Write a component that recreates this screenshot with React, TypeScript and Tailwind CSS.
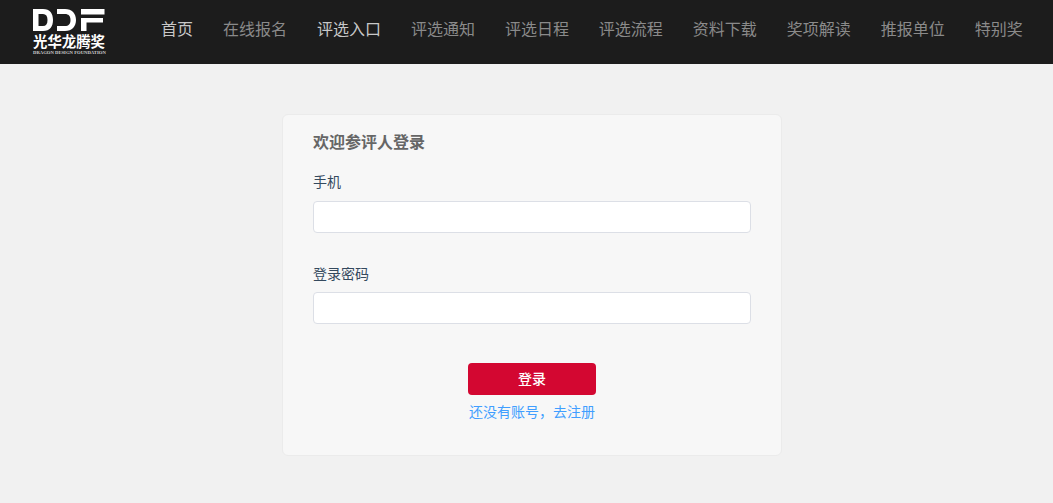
const cjk = "font-['Liberation_Sans','Noto_Sans_CJK_SC',sans-serif]";

const navItems = [
  { label: "首页", active: true },
  { label: "在线报名" },
  { label: "评选入口", active: true },
  { label: "评选通知" },
  { label: "评选日程" },
  { label: "评选流程" },
  { label: "资料下载" },
  { label: "奖项解读" },
  { label: "推报单位" },
  { label: "特别奖" },
];

function Logo() {
  return (
    <div className="flex w-[74px] flex-col items-start pt-[1px]">
      <svg width="73" height="22" viewBox="0 0 73 22" className="block" fill="#ffffff">
        <path fillRule="evenodd" d="M1 0H11C18 0 21 4.5 21 11C21 17.5 18 22 11 22H1ZM6.5 5V17H11C14 17 15.5 15 15.5 11C15.5 7 14 5 11 5Z" />
        <path d="M25 0H33C40 0 44 4.5 44 11C44 17.5 40 22 33 22H25V17H33C36.5 17 38.5 15 38.5 11C38.5 7 36.5 5 33 5H25Z" />
        <path d="M49 0H72.5V5.5H49ZM49 9H71V13.5H54.5V22H49Z" />
      </svg>
      <div className="mt-[3px] ml-[1px] whitespace-nowrap text-[14.4px] leading-[16px] font-bold text-white">光华龙腾奖</div>
      <div className="ml-[1px] whitespace-nowrap font-['Liberation_Serif',serif] text-[4.7px] leading-[6px] font-bold text-[#cfcfcf]">
        DRAGON DESIGN FOUNDATION
      </div>
    </div>
  );
}

function Field({ label, className, gap }: { label: string; className?: string; gap: string }) {
  return (
    <div className={className}>
      <label className="block text-sm leading-5 text-[#34495e]">{label}</label>
      <input
        type="text"
        className={`${gap} block h-8 w-full rounded-[4px] border border-[#dcdfe6] bg-white outline-none`}
      />
    </div>
  );
}

export default function App() {
  return (
    <div className={`${cjk} min-h-[503px] bg-[#f1f1f1]`}>
      <header className="flex h-16 items-center bg-[#1c1c1c] pl-[32px]">
        <Logo />
        <nav className="ml-[55px] flex gap-[29.96px] pb-[4px] whitespace-nowrap">
          {navItems.map((item) => (
            <a
              key={item.label}
              className={`text-base leading-6 ${item.active ? "text-[#c8c8c8]" : "text-[#8a8a8a]"}`}
            >
              {item.label}
            </a>
          ))}
        </nav>
      </header>
      <main className="flex justify-center pt-[50px] pl-[11px]">
        <section className="h-[342px] w-[500px] rounded-[6px] border border-[#ebebeb] bg-[#f7f7f7] pt-[16px] pr-[30px] pl-[30px]">
          <h1 className="text-base leading-6 font-bold text-[#666666]">欢迎参评人登录</h1>
          <Field label="手机" className="mt-[17px]" gap="mt-[9px]" />
          <Field label="登录密码" className="mt-[31px]" gap="mt-[8px]" />
          <div className="mt-[39px] flex flex-col items-center">
            <button className="h-8 w-32 rounded-[4px] bg-[#d30731] text-sm font-medium text-white">登录</button>
            <a className="mt-[7px] text-sm leading-5 text-[#409eff]">还没有账号，去注册</a>
          </div>
        </section>
      </main>
    </div>
  );
}
